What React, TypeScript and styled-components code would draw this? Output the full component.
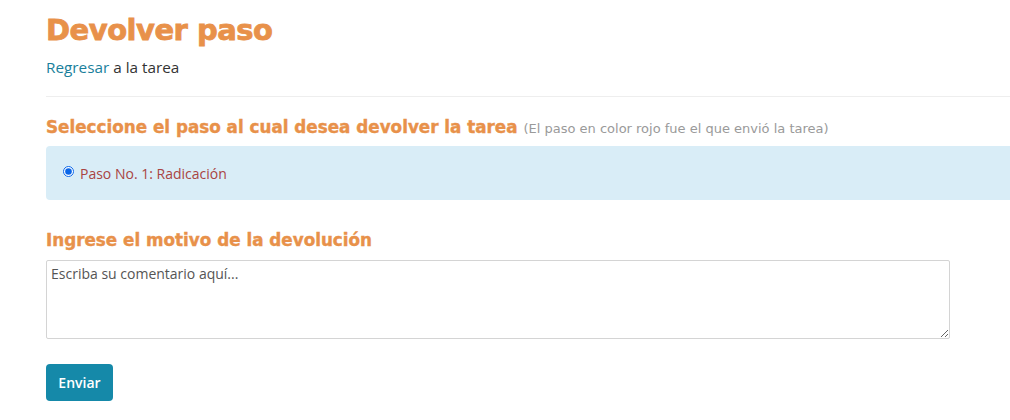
import styled, { createGlobalStyle } from 'styled-components';

const GlobalStyle = createGlobalStyle`
  html, body {
    margin: 0;
    padding: 0;
    background: #ffffff;
    overflow: hidden;
  }
  body {
    font-family: "Open Sans", "Noto Sans", sans-serif;
    color: #333333;
  }
`;

export default function App() {
  return (
    <>
      <GlobalStyle />
      <Page>
        <Title>Devolver paso</Title>
        <BackLine>
          <BackLink href="#">Regresar</BackLink> a la tarea
        </BackLine>
        <Divider />

        <SectionTitle>
          Seleccione el paso al cual desea devolver la tarea{' '}
          <Hint>(El paso en color rojo fue el que envió la tarea)</Hint>
        </SectionTitle>
        <StepBox>
          <StepOption>
            <input type="radio" name="paso" defaultChecked />
            Paso No. 1: Radicación
          </StepOption>
        </StepBox>

        <SectionTitle>Ingrese el motivo de la devolución</SectionTitle>
        <Comment placeholder="Escriba su comentario aquí..." />

        <SendButton>Enviar</SendButton>
      </Page>
    </>
  );
}

const Page = styled.div`
  display: flex;
  flex-direction: column;
  align-items: flex-start;
  padding: 12px 0 0 46px;
  width: 1010px;
  box-sizing: border-box;
`;

const Title = styled.h1`
  margin: 0;
  font-family: "DejaVu Sans", "Noto Sans", sans-serif;
  font-size: 29px;
  font-weight: 700;
  letter-spacing: -0.5px;
  line-height: 36px;
  color: #e8914a;
  -webkit-text-stroke: 0.8px #e8914a;
`;

const BackLine = styled.div`
  margin-top: 9px;
  font-size: 15.3px;
  line-height: 20px;
  color: #333333;
`;

const BackLink = styled.a`
  color: #1a7f9c;
  text-decoration: none;
`;

const Divider = styled.hr`
  align-self: stretch;
  margin: 19px 0 0 0;
  border: none;
  border-top: 1px solid #eeeeee;
`;

const SectionTitle = styled.h3`
  margin: 18px 0 5px 0;
  font-family: "DejaVu Sans", "Noto Sans", sans-serif;
  font-size: 16.8px;
  font-weight: 700;
  letter-spacing: 0;
  line-height: 24px;
  color: #e8914a;
  -webkit-text-stroke: 0.4px #e8914a;
`;

const Hint = styled.small`
  font-family: "DejaVu Sans", "Noto Sans", sans-serif;
  font-size: 13px;
  font-weight: 400;
  letter-spacing: 0;
  color: #9a9a9a;
  -webkit-text-stroke: 0;
`;

const StepBox = styled.div`
  align-self: stretch;
  box-sizing: border-box;
  margin-right: -10px;
  height: 54px;
  display: flex;
  align-items: center;
  padding: 0 17px;
  background: #d9edf7;
  border-radius: 4px 0 0 4px;
  margin-bottom: 10px;
`;

const StepOption = styled.label`
  display: flex;
  align-items: center;
  gap: 2px;
  font-size: 14px;
  color: #a94442;

  input {
    margin: 0 4px 4px 0;
    width: 11px;
    height: 11px;
    accent-color: #0a66e8;
  }
`;

const Comment = styled.textarea`
  margin-top: 3px;
  width: 904px;
  height: 79px;
  box-sizing: border-box;
  padding: 3px 4px;
  border: 1px solid #d4d4d4;
  border-radius: 2px;
  resize: vertical;
  font-family: "Open Sans", "Noto Sans", sans-serif;
  font-size: 14px;
  color: #555555;

  &::placeholder {
    color: #555555;
  }
`;

const SendButton = styled.button`
  margin-top: 25px;
  width: 67px;
  height: 37px;
  border: none;
  border-radius: 4px;
  background: #1589a9;
  color: #ffffff;
  font-family: "Open Sans", "Noto Sans", sans-serif;
  font-size: 14px;
  font-weight: 600;
`;
